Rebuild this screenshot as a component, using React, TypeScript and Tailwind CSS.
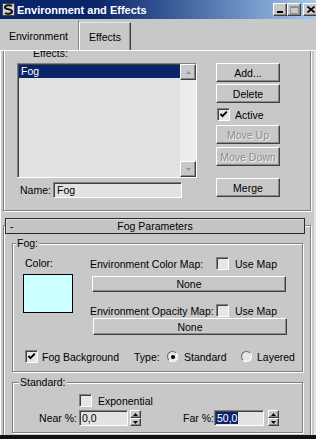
import React from 'react';

const raised =
  'border border-t-white border-l-white border-r-[#404040] border-b-[#404040] shadow-[inset_-1px_-1px_0_#8a8a8a]';
const sunken =
  'border border-t-[#808080] border-l-[#808080] border-r-white border-b-white shadow-[inset_1px_1px_0_#404040]';
const etched = 'border border-[#808080] shadow-[1px_1px_0_#fff,inset_1px_1px_0_#fff]';

function Btn({
  children,
  className = '',
  disabled = false,
}: {
  children: React.ReactNode;
  className?: string;
  disabled?: boolean;
}) {
  return (
    <div
      className={`flex items-center justify-center whitespace-nowrap ${raised} ${
        disabled ? 'text-[#8c8c8c] [text-shadow:1px_1px_0_#f4f4f4]' : ''
      } ${className}`}
    >
      {children}
    </div>
  );
}

function Check({ checked = false }: { checked?: boolean }) {
  return (
    <span className={`flex h-[13px] w-[13px] shrink-0 items-center justify-center bg-[#e6e6e6] ${sunken}`}>
      {checked && (
        <svg width="9" height="9" viewBox="0 0 9 9">
          <path d="M1.5 4 L3.5 6.2 L7.8 1.6" stroke="#000" strokeWidth="1.9" fill="none" />
        </svg>
      )}
    </span>
  );
}

function Radio({ on = false }: { on?: boolean }) {
  return (
    <span className="flex h-[11px] w-[11px] shrink-0 items-center justify-center rounded-full border border-t-[#6a6a6a] border-l-[#6a6a6a] border-r-white border-b-white bg-[#e6e6e6]">
      {on && <span className="h-[4px] w-[4px] rounded-full bg-black" />}
    </span>
  );
}

function Arrow({ up, color = '#000' }: { up: boolean; color?: string }) {
  return (
    <svg width="5" height="3" viewBox="0 0 5 3">
      <path d={up ? 'M2.5 0 L5 3 L0 3 Z' : 'M0 0 L5 0 L2.5 3 Z'} fill={color} />
    </svg>
  );
}

function Spinner() {
  return (
    <div className="flex h-[16px] w-[11px] flex-col">
      <div className={`flex h-[8px] items-center justify-center ${raised}`}>
        <Arrow up />
      </div>
      <div className={`flex h-[8px] items-center justify-center ${raised}`}>
        <Arrow up={false} />
      </div>
    </div>
  );
}

function TitleBar() {
  return (
    <div className="flex h-[19px] shrink-0 items-center bg-linear-to-r from-[#0a246a] via-[#0a246a] via-30% to-[#a6caf0] pl-[2px]">
      <svg width="13" height="13" viewBox="0 0 13 13">
        <rect x="0.5" y="0.5" width="12" height="12" fill="#d6d6d6" stroke="#404040" />
        <path d="M10 3 C8 1.5 3 2 3 4.5 C3 7 10 5.5 10 8.5 C10 11 5 11.5 3 10" stroke="#101010" strokeWidth="2" fill="none" />
      </svg>
      <span className="ml-[2px] text-[11px] font-bold text-white">Environment and Effects</span>
      <div className="ml-auto mr-[-3px] flex items-center">
        <div className={`flex h-[13px] w-[14px] items-end justify-center bg-[#c8c8c8] pb-[2px] ${raised}`}>
          <span className="h-[2px] w-[6px] bg-black" />
        </div>
        <div className={`flex h-[13px] w-[14px] items-center justify-center bg-[#c8c8c8] ${raised}`}>
          <span className="h-[8px] w-[9px] border border-t-2 border-[#909090]" />
        </div>
        <div className={`ml-[2px] flex h-[13px] w-[16px] items-center justify-center bg-[#c8c8c8] ${raised}`}>
          <svg width="8" height="7" viewBox="0 0 8 7">
            <path d="M0.5 0.5 L7.5 6.5 M7.5 0.5 L0.5 6.5" stroke="#000" strokeWidth="1.6" />
          </svg>
        </div>
      </div>
    </div>
  );
}

function Tabs() {
  return (
    <div className="flex h-[31px] shrink-0 items-end">
      <div className="flex h-[30px] w-[79px] items-center border-r border-r-[#8a8a8a] pl-[9px] pt-[1px] text-[10.5px]">
        Environment
      </div>
      <div className="flex h-[28px] w-[52px] items-center justify-center border-l border-t border-l-white border-t-[#e6e6e6] border-r border-r-[#404040] shadow-[inset_-1px_0_0_#8a8a8a] text-[10.5px]">
        Effects
      </div>
    </div>
  );
}

export default function App() {
  return (
    <div className="flex h-[439px] w-[316px] flex-col overflow-hidden bg-[#c8c8c8] font-['Liberation_Sans',Arial,sans-serif] text-[10.5px] leading-[12px] text-black">
      <TitleBar />
      <Tabs />

      <div className="flex h-[385px] shrink-0 flex-col overflow-hidden border-l border-t border-l-white border-t-white border-r-2 border-r-[#e4e4e4]">
        {/* Effects rollout (scrolled, top hidden) */}
        <div className="ml-[2px] h-[160px] w-[308px] shrink-0 overflow-hidden border-x border-b border-[#808080] shadow-[1px_1px_0_#fff,inset_1px_0_0_#fff]">
          <div className="-mt-[4px] ml-[29px]">Effects:</div>
          <div className="mt-[4px] flex pl-[13px]">
            <div className="flex w-[180px] flex-col">
              <div className={`flex h-[115px] bg-[#e2e2e2] ${sunken}`}>
                <div className="flex-1 pl-[1px] pt-[1px]">
                  <div className="h-[13px] bg-[#0a246a] pl-[2px] text-white">Fog</div>
                </div>
                <div className="flex w-[16px] flex-col justify-between bg-[#ececec]">
                  <div className={`flex h-[16px] items-center justify-center bg-[#c8c8c8] ${raised}`}>
                    <Arrow up color="#909090" />
                  </div>
                  <div className={`flex h-[16px] items-center justify-center bg-[#c8c8c8] ${raised}`}>
                    <Arrow up={false} color="#909090" />
                  </div>
                </div>
              </div>
              <div className="mt-[4px] flex h-[16px] items-center">
                <span className="ml-[3px] w-[33px]">Name:</span>
                <div className={`flex h-[16px] w-[129px] items-center bg-[#e2e2e2] pl-[3px] ${sunken}`}>Fog</div>
              </div>
            </div>
            <div className="ml-[19px] flex w-[64px] flex-col">
              <Btn className="h-[19px]">Add...</Btn>
              <Btn className="mt-[2px] h-[19px]">Delete</Btn>
              <div className="mt-[5px] flex h-[13px] items-center pl-[1px]">
                <Check checked />
                <span className="ml-[5px]">Active</span>
              </div>
              <Btn disabled className="mt-[4px] h-[19px]">
                Move Up
              </Btn>
              <Btn disabled className="mt-[3px] h-[19px]">
                Move Down
              </Btn>
              <Btn className="mt-[12px] h-[19px]">Merge</Btn>
            </div>
          </div>
        </div>

        {/* Fog Parameters rollout */}
        <div className="ml-[2px] mt-[14px] w-[308px] flex-1 border-x border-t border-[#808080] shadow-[1px_1px_0_#fff,inset_1px_1px_0_#fff]">
          <div className="relative -mt-[8px] ml-[1px] flex h-[16px] w-[300px] items-center border border-[#2a2a2a] bg-[#c4c4c4] shadow-[inset_1px_1px_0_#dcdcdc]">
            <span className="w-[24px] pl-[4px]">-</span>
            <span className="flex-1 text-center">Fog Parameters</span>
            <span className="w-[24px]" />
          </div>

          {/* Fog group */}
          <div className={`ml-[8px] mt-[9px] w-[291px] pb-[8px] ${etched}`}>
            <div className="-mt-[7px] ml-[3px] w-fit bg-[#c8c8c8] px-[1px]">Fog:</div>
            <div className="mt-[8px] flex">
              <div className="w-[77px]">
                <div className="pl-[12px]">Color:</div>
                <div className="ml-[10px] mt-[5px] h-[39px] w-[50px] border border-black bg-[#ccffff]" />
              </div>
              <div className="flex flex-col">
                <div className="flex h-[13px] items-center whitespace-nowrap">
                  <span className="w-[126px]">Environment Color Map:</span>
                  <Check />
                  <span className="ml-[6px]">Use Map</span>
                </div>
                <Btn className="ml-[2px] mt-[6px] h-[16px] w-[194px]">None</Btn>
                <div className="mt-[12px] flex h-[13px] items-center whitespace-nowrap">
                  <span className="w-[126px]">Environment Opacity Map:</span>
                  <Check />
                  <span className="ml-[6px]">Use Map</span>
                </div>
                <Btn className="ml-[3px] mt-[1px] h-[17px] w-[194px]">None</Btn>
              </div>
            </div>
            <div className="mt-[15px] flex h-[13px] items-center whitespace-nowrap pl-[12px]">
              <Check checked />
              <span className="ml-[4px] w-[92px]">Fog Background</span>
              <span className="w-[33px]">Type:</span>
              <Radio on />
              <span className="ml-[6px] w-[57px]">Standard</span>
              <Radio />
              <span className="ml-[5px]">Layered</span>
            </div>
          </div>

          {/* Standard group */}
          <div className={`ml-[8px] mt-[10px] w-[291px] pb-[6px] ${etched}`}>
            <div className="-mt-[7px] ml-[6px] w-fit bg-[#c8c8c8] px-[1px]">Standard:</div>
            <div className="mt-[6px] flex h-[13px] items-center pl-[66px]">
              <Check />
              <span className="ml-[6px]">Exponential</span>
            </div>
            <div className="mt-[3px] flex h-[16px] items-center whitespace-nowrap">
              <span className="w-[64px] text-right">Near %:</span>
              <div className={`ml-[2px] flex h-[16px] w-[49px] items-center bg-[#e2e2e2] pl-[2px] ${sunken}`}>0,0</div>
              <div className="ml-[2px]">
                <Spinner />
              </div>
              <span className="ml-[42px] w-[31px] shrink-0">Far %:</span>
              <div className={`flex h-[16px] w-[50px] items-center bg-[#e2e2e2] pl-[1px] ${sunken}`}>
                <span className="bg-[#0a246a] px-[1px] text-white">50,0</span>
              </div>
              <div className="ml-[4px]">
                <Spinner />
              </div>
            </div>
          </div>
        </div>
      </div>

      <div className="h-[4px] shrink-0 bg-[#111]" />
    </div>
  );
}
